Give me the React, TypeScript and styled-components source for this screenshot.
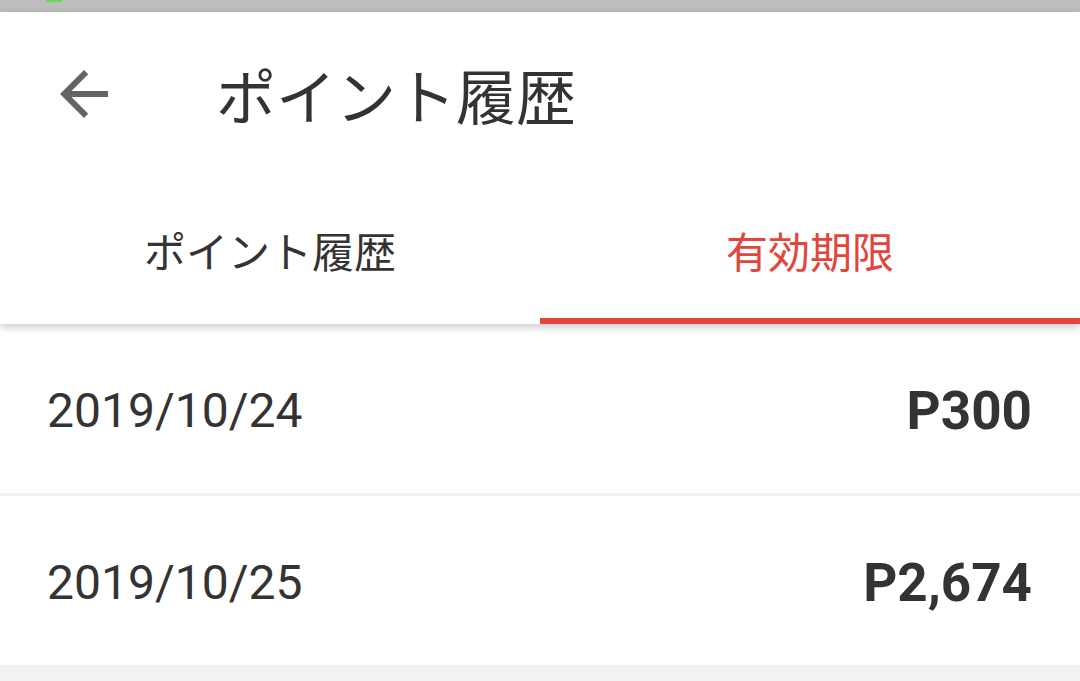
import React from "react";
import styled, { createGlobalStyle } from "styled-components";

const GlobalStyle = createGlobalStyle`
  html, body { margin: 0; padding: 0; background: #f2f2f2; }
  body { font-family: Roboto, "Noto Sans CJK JP", sans-serif; color: #333; }
  * { box-sizing: border-box; }
`;

const Page = styled.div`
  width: 1080px;
  min-height: 681px;
  background: #f2f2f2;
  display: flex;
  flex-direction: column;
`;

const StatusBar = styled.div`
  height: 12px;
  background: #bdbdbd;
  position: relative;
  flex: none;
`;

const StatusDot = styled.span`
  position: absolute;
  left: 46px;
  top: 0;
  width: 16px;
  height: 2px;
  background: #5be04a;
`;

const TopArea = styled.div`
  background: #fff;
  box-shadow: 0 3px 8px rgba(0, 0, 0, 0.22);
  position: relative;
  z-index: 2;
`;

const Header = styled.header`
  height: 168px;
  display: flex;
  align-items: center;
  padding-left: 48px;
  padding-bottom: 4px;
`;

const BackButton = styled.button`
  width: 72px;
  height: 72px;
  border: none;
  background: none;
  padding: 0;
  display: flex;
  align-items: center;
  justify-content: center;
  color: #646464;
  cursor: pointer;
`;

const Title = styled.h1`
  margin: 0 0 0 96px;
  font-family: "Noto Sans CJK JP", sans-serif;
  font-weight: 400;
  font-size: 60px;
  line-height: 1;
  color: #333;
`;

const Tabs = styled.nav`
  height: 144px;
  display: grid;
  grid-template-columns: 1fr 1fr;
`;

const Tab = styled.div<{ $active?: boolean }>`
  display: flex;
  align-items: center;
  justify-content: center;
  font-family: "Noto Sans CJK JP", sans-serif;
  font-size: 42px;
  color: ${(p) => (p.$active ? "#e2453c" : "#333")};
  border-bottom: 6px solid ${(p) => (p.$active ? "#e2453c" : "transparent")};
`;

const List = styled.div`
  display: flex;
  flex-direction: column;
  gap: 3px;
  background: #f2f2f2;
`;

const Row = styled.div`
  height: 169px;
  background: #fff;
  display: flex;
  align-items: center;
  justify-content: space-between;
  padding: 4px 48px 0 47px;
`;

const DateText = styled.span`
  font-family: Roboto, sans-serif;
  font-size: 48px;
  color: #333;
`;

const Amount = styled.span`
  font-family: Roboto, sans-serif;
  font-weight: 700;
  font-size: 53px;
  color: #333;
`;

const ArrowBack = () => (
  <svg width="72" height="72" viewBox="0 0 24 24" fill="currentColor">
    <path d="M20 11H7.83l5.59-5.59L12 4l-8 8 8 8 1.41-1.41L7.83 13H20v-2z" />
  </svg>
);

const rows = [
  { date: "2019/10/24", amount: "P300" },
  { date: "2019/10/25", amount: "P2,674" },
];

export default function App() {
  return (
    <Page>
      <GlobalStyle />
      <StatusBar>
        <StatusDot />
      </StatusBar>
      <TopArea>
        <Header>
          <BackButton aria-label="戻る">
            <ArrowBack />
          </BackButton>
          <Title>ポイント履歴</Title>
        </Header>
        <Tabs>
          <Tab>ポイント履歴</Tab>
          <Tab $active>有効期限</Tab>
        </Tabs>
      </TopArea>
      <List>
        {rows.map((r) => (
          <Row key={r.date}>
            <DateText>{r.date}</DateText>
            <Amount>{r.amount}</Amount>
          </Row>
        ))}
      </List>
    </Page>
  );
}
